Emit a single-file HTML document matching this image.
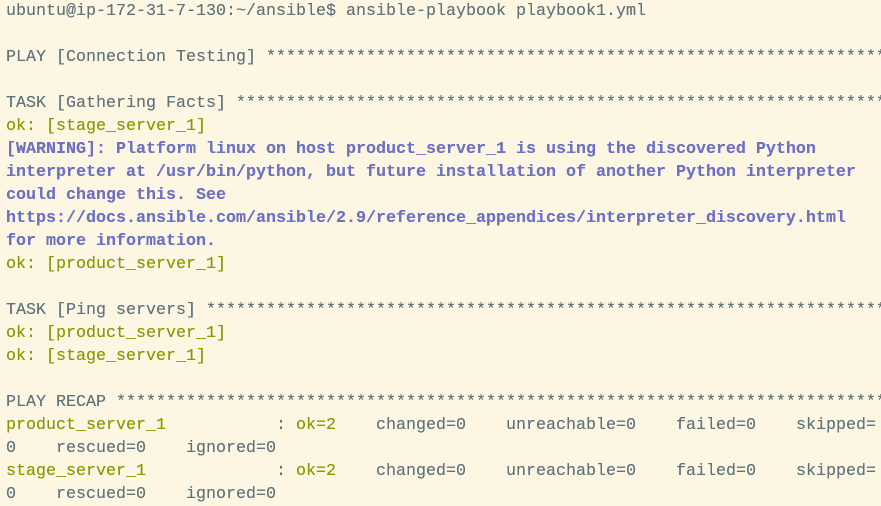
<!DOCTYPE html>
<html><head><meta charset="utf-8"><style>
html,body{margin:0;padding:0;background:#fdf6e3;width:881px;height:506px;overflow:hidden}
pre{margin:0;padding:0 0 0 6px;position:relative;top:0;font-family:"Liberation Mono",monospace;font-size:16.7px;letter-spacing:-0.015px;line-height:23px;color:#5f737b;white-space:pre;overflow:hidden;width:875px;text-shadow:0 0 0.3px currentColor}
.g{color:#859900}.w{color:#6c71c4;font-weight:bold}
</style></head><body><pre>ubuntu@ip-172-31-7-130:~/ansible$ ansible-playbook playbook1.yml

PLAY [Connection Testing] ******************************************************************

TASK [Gathering Facts] *********************************************************************
<span class="g">ok: [stage_server_1]</span>
<span class="w">[WARNING]: Platform linux on host product_server_1 is using the discovered Python
interpreter at /usr/bin/python, but future installation of another Python interpreter
could change this. See
https://docs.ansible.com/ansible/2.9/reference_appendices/interpreter_discovery.html
for more information.</span>
<span class="g">ok: [product_server_1]</span>

TASK [Ping servers] ************************************************************************
<span class="g">ok: [product_server_1]</span>
<span class="g">ok: [stage_server_1]</span>

PLAY RECAP *********************************************************************************
<span class="g">product_server_1</span>           : <span class="g">ok=2</span>    changed=0    unreachable=0    failed=0    skipped=
0    rescued=0    ignored=0
<span class="g">stage_server_1</span>             : <span class="g">ok=2</span>    changed=0    unreachable=0    failed=0    skipped=
0    rescued=0    ignored=0
</pre></body></html>
